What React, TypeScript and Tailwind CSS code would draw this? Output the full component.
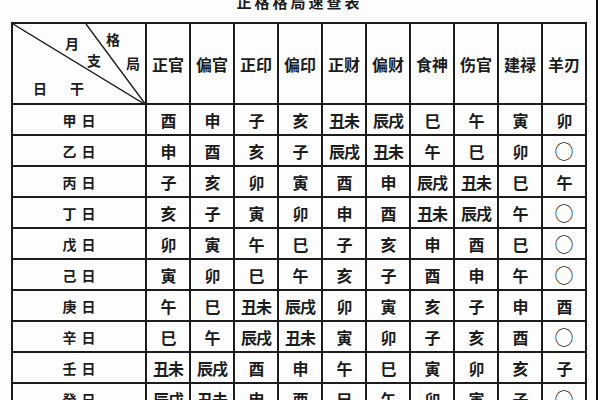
const cols = ["正官", "偏官", "正印", "偏印", "正财", "偏财", "食神", "伤官", "建禄", "羊刃"];

const rows: [string, string[]][] = [
  ["甲日", ["酉", "申", "子", "亥", "丑未", "辰戌", "巳", "午", "寅", "卯"]],
  ["乙日", ["申", "酉", "亥", "子", "辰戌", "丑未", "午", "巳", "卯", "○"]],
  ["丙日", ["子", "亥", "卯", "寅", "酉", "申", "辰戌", "丑未", "巳", "午"]],
  ["丁日", ["亥", "子", "寅", "卯", "申", "酉", "丑未", "辰戌", "午", "○"]],
  ["戊日", ["卯", "寅", "午", "巳", "子", "亥", "申", "酉", "巳", "○"]],
  ["己日", ["寅", "卯", "巳", "午", "亥", "子", "酉", "申", "午", "○"]],
  ["庚日", ["午", "巳", "丑未", "辰戌", "卯", "寅", "亥", "子", "申", "酉"]],
  ["辛日", ["巳", "午", "辰戌", "丑未", "寅", "卯", "子", "亥", "酉", "○"]],
  ["壬日", ["丑未", "辰戌", "酉", "申", "午", "巳", "寅", "卯", "亥", "子"]],
  ["癸日", ["辰戌", "丑未", "申", "酉", "巳", "午", "卯", "寅", "子", "○"]],
];

// 表头左上角的斜线格：两条斜线 + 月支/格局/日干 标注
function Corner() {
  return (
    <th className="relative h-[81px] w-[133px] border-2 border-[#1c1c1c] p-0 font-semibold">
      <svg className="absolute inset-0" width="133" height="81" viewBox="0 0 133 81">
        <line x1="0" y1="0" x2="133" y2="81" stroke="#1c1c1c" strokeWidth="1.4" />
        <line x1="73" y1="0" x2="133" y2="81" stroke="#1c1c1c" strokeWidth="1.4" />
      </svg>
      <span className="absolute left-[52px] top-[12px] text-[14px] leading-none">月</span>
      <span className="absolute left-[74px] top-[29px] text-[14px] leading-none">支</span>
      <span className="absolute left-[93px] top-[8px] text-[14px] leading-none">格</span>
      <span className="absolute left-[113px] top-[32px] text-[14px] leading-none">局</span>
      <span className="absolute left-[20px] top-[57px] text-[14px] leading-none">日</span>
      <span className="absolute left-[57px] top-[57px] text-[14px] leading-none">干</span>
    </th>
  );
}

export default function App() {
  return (
    <div
      className="relative flex h-[400px] w-[600px] overflow-hidden bg-[#fdfdfd] text-[#1c1c1c]"
      style={{ fontFamily: '"Noto Sans CJK SC", "Noto Sans CJK TC", sans-serif' }}
    >
      <div className="ml-[11px] flex w-[575px] shrink-0 flex-col">
        <div className="-mt-[6px] h-[28px] shrink-0 pl-[2px] text-center text-[15px] font-bold leading-none tracking-[3px]">
          正格格局速查表
        </div>
        <table className="w-[575px] shrink-0 table-fixed border-collapse">
          <colgroup>
            <col className="w-[134px]" />
            {cols.map((c) => (
              <col key={c} className="w-[44px]" />
            ))}
          </colgroup>
          <thead>
            <tr>
              <Corner />
              {cols.map((c) => (
                <th
                  key={c}
                  className="h-[81px] whitespace-nowrap border-2 border-[#1c1c1c] p-0 text-center text-[16px] font-semibold leading-none"
                >
                  {c}
                </th>
              ))}
            </tr>
          </thead>
          <tbody>
            {rows.map(([label, vals]) => (
              <tr key={label}>
                <td className="h-[31px] border-2 border-[#1c1c1c] p-0 pl-[5px] text-center text-[14px] font-semibold leading-none tracking-[5px]">
                  {label}
                </td>
                {vals.map((v, i) => (
                  <td
                    key={i}
                    className={
                      v === "○"
                        ? "h-[31px] border-2 border-[#1c1c1c] p-0 text-center text-[19px] font-normal leading-none"
                        : "h-[31px] whitespace-nowrap border-2 border-[#1c1c1c] p-0 text-center text-[16px] font-semibold leading-none tracking-[-1px]"
                    }
                  >
                    {v}
                  </td>
                ))}
              </tr>
            ))}
          </tbody>
        </table>
      </div>
      <div className="ml-[10px] h-full w-[2px] shrink-0 bg-[#111]" />
    </div>
  );
}
